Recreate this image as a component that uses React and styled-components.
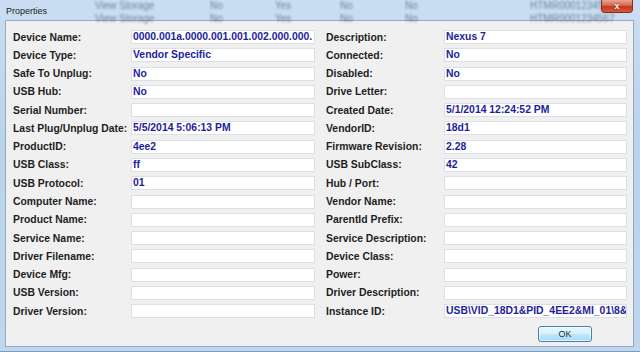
import React from "react";
import styled, { createGlobalStyle } from "styled-components";

const Global = createGlobalStyle`
  html, body { margin: 0; padding: 0; }
  body {
    width: 640px; height: 352px; overflow: hidden;
    font-family: "Liberation Sans", Arial, sans-serif;
    background: #bcd5ec;
  }
`;

const Frame = styled.div`
  width: 640px;
  height: 352px;
  box-sizing: border-box;
  display: flex;
  flex-direction: column;
  padding: 0 6px 4px 5px;
  background: linear-gradient(180deg, #c9def2 0%, #b9d3ec 40%, #bed7ee 100%);
  border-bottom: 1px solid #7f9db9;
  position: relative;
  overflow: hidden;
`;

const TitleBar = styled.div`
  height: 20px;
  display: flex;
  align-items: flex-start;
  position: relative;
`;

const Backdrop = styled.div`
  position: absolute;
  inset: 0 -6px 0 -5px;
  display: flex;
  flex-direction: column;
  gap: 3px;
  padding-top: 1px;
  filter: blur(1.2px);
  opacity: 0.6;
  pointer-events: none;
`;

const BackRow = styled.div`
  display: flex;
  font-size: 10px;
  color: #33445c;
  height: 10px;
  line-height: 10px;
  white-space: nowrap;
`;

const BackCell = styled.span`
  width: ${(p) => p.$w}px;
  flex: none;
`;

const Title = styled.div`
  position: relative;
  font-size: 9px;
  color: #1b1b1b;
  padding: 6px 0 0 1px;
  line-height: 10px;
`;

const Close = styled.div`
  position: relative;
  margin-left: auto;
  margin-right: 1px;
  width: 32px;
  height: 13px;
  box-sizing: border-box;
  border: 1px solid #8a2b1c;
  border-top: none;
  border-radius: 0 0 4px 4px;
  background: linear-gradient(180deg, #e9a595 0%, #d7664f 45%, #c6391f 55%, #d55a3a 100%);
  display: flex;
  align-items: center;
  justify-content: center;
  color: #fff;
  font-size: 9px;
  font-weight: bold;
  line-height: 1;
  text-shadow: 0 0 2px #6d1606;
`;

const Client = styled.div`
  flex: 1;
  background: #f0f0f0;
  border: 1px solid #95a9c0;
  display: flex;
  flex-direction: column;
  padding: 7px 6px 0 7px;
`;

const Grid = styled.div`
  display: grid;
  grid-template-columns: 118px 184px 129px 183px;
  grid-template-rows: repeat(16, 18.27px);
  align-items: center;
`;

const Label = styled.div`
  font-size: 10.4px;
  font-weight: bold;
  color: #1e1e1e;
  padding-left: ${(p) => (p.$indent ? 11 : 0)}px;
  white-space: nowrap;
`;

const Box = styled.div`
  height: 14px;
  box-sizing: border-box;
  background: #fff;
  border: 1px solid #dcdfe5;
  padding: 0 1px;
  font-size: 10.4px;
  font-weight: bold;
  line-height: 12px;
  color: #1e1e9c;
  white-space: nowrap;
  overflow: hidden;
  text-overflow: clip;
`;

const ButtonRow = styled.div`
  display: flex;
  justify-content: flex-end;
  padding-right: 35px;
  margin-top: 6px;
`;

const OkButton = styled.div`
  width: 54px;
  height: 16px;
  box-sizing: border-box;
  border: 1px solid #3c7fb1;
  border-radius: 3px;
  background: linear-gradient(180deg, #eaf6fd 0%, #d9f0fc 45%, #bee6fd 55%, #a7d9f5 100%);
  box-shadow: inset 0 0 0 1px rgba(255,255,255,0.7);
  display: flex;
  align-items: center;
  justify-content: center;
  font-size: 9px;
  color: #2a2a2a;
`;

const rows = [
  ["Device Name:", "0000.001a.0000.001.001.002.000.000.", "Description:", "Nexus 7"],
  ["Device Type:", "Vendor Specific", "Connected:", "No"],
  ["Safe To Unplug:", "No", "Disabled:", "No"],
  ["USB Hub:", "No", "Drive Letter:", ""],
  ["Serial Number:", "", "Created Date:", "5/1/2014 12:24:52 PM"],
  ["Last Plug/Unplug Date:", "5/5/2014 5:06:13 PM", "VendorID:", "18d1"],
  ["ProductID:", "4ee2", "Firmware Revision:", "2.28"],
  ["USB Class:", "ff", "USB SubClass:", "42"],
  ["USB Protocol:", "01", "Hub / Port:", ""],
  ["Computer Name:", "", "Vendor Name:", ""],
  ["Product Name:", "", "ParentId Prefix:", ""],
  ["Service Name:", "", "Service Description:", ""],
  ["Driver Filename:", "", "Device Class:", ""],
  ["Device Mfg:", "", "Power:", ""],
  ["USB Version:", "", "Driver Description:", ""],
  ["Driver Version:", "", "Instance ID:", "USB\\VID_18D1&PID_4EE2&MI_01\\8&2"],
];

const back = [
  [[95, ""], [115, "View Storage"], [65, "No"], [65, "Yes"], [65, "No"], [125, "No"], [100, "HTMR0001234567"]],
  [[95, ""], [115, "View Storage"], [65, "No"], [65, "Yes"], [65, "No"], [125, "No"], [100, "HTMR0001234567"]],
];

export default function App() {
  return (
    <>
      <Global />
      <Frame>
        <TitleBar>
          <Backdrop>
            {back.map((r, i) => (
              <BackRow key={i}>
                {r.map(([w, t], j) => (
                  <BackCell key={j} $w={w}>{t}</BackCell>
                ))}
              </BackRow>
            ))}
          </Backdrop>
          <Title>Properties</Title>
          <Close>x</Close>
        </TitleBar>
        <Client>
          <Grid>
            {rows.map(([l1, v1, l2, v2]) => (
              <React.Fragment key={l1}>
                <Label>{l1}</Label>
                <Box>{v1}</Box>
                <Label $indent>{l2}</Label>
                <Box>{v2}</Box>
              </React.Fragment>
            ))}
          </Grid>
          <ButtonRow>
            <OkButton>OK</OkButton>
          </ButtonRow>
        </Client>
      </Frame>
    </>
  );
}
